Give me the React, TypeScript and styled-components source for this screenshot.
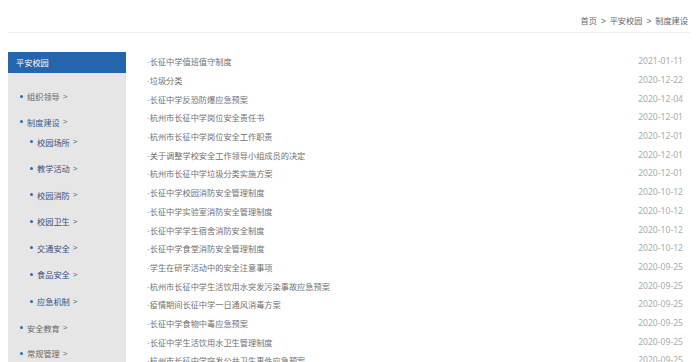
import React from 'react'
import styled, { createGlobalStyle } from 'styled-components'

const GlobalStyle = createGlobalStyle`
  body {
    margin: 0;
    background: #fff;
    font-family: "Noto Sans CJK SC", "Noto Sans", sans-serif;
  }
`

type MenuItem = { name: string; active?: boolean; children?: string[] }

const menu: MenuItem[] = [
  { name: '组织领导' },
  {
    name: '制度建设',
    active: true,
    children: ['校园场所', '教学活动', '校园消防', '校园卫生', '交通安全', '食品安全', '应急机制'],
  },
  { name: '安全教育' },
  { name: '常规管理' },
]

const articles = [
  ['长征中学值班值守制度', '2021-01-11'],
  ['垃圾分类', '2020-12-22'],
  ['长征中学反恐防爆应急预案', '2020-12-04'],
  ['杭州市长征中学岗位安全责任书', '2020-12-01'],
  ['杭州市长征中学岗位安全工作职责', '2020-12-01'],
  ['关于调整学校安全工作领导小组成员的决定', '2020-12-01'],
  ['杭州市长征中学垃圾分类实施方案', '2020-12-01'],
  ['长征中学校园消防安全管理制度', '2020-10-12'],
  ['长征中学实验室消防安全管理制度', '2020-10-12'],
  ['长征中学学生宿舍消防安全制度', '2020-10-12'],
  ['长征中学食堂消防安全管理制度', '2020-10-12'],
  ['学生在研学活动中的安全注意事项', '2020-09-25'],
  ['杭州市长征中学生活饮用水突发污染事故应急预案', '2020-09-25'],
  ['疫情期间长征中学一日通风消毒方案', '2020-09-25'],
  ['长征中学食物中毒应急预案', '2020-09-25'],
  ['长征中学生活饮用水卫生管理制度', '2020-09-25'],
  ['杭州市长征中学突发公共卫生事件应急预案', '2020-09-25'],
]

function App() {
  return (
    <Page>
      <GlobalStyle />
      <Breadcrumb>
        <Crumb>首页</Crumb>
        <Sep>&gt;</Sep>
        <Crumb>平安校园</Crumb>
        <Sep>&gt;</Sep>
        <Crumb>制度建设</Crumb>
      </Breadcrumb>
      <Body>
        <Sidebar>
          <SideTitle>平安校园</SideTitle>
          <Menu>
            {menu.map((item) => (
              <li key={item.name}>
                <MenuRow $active={item.active}>
                  <Bullet />
                  {item.name}
                  <Arrow>&gt;</Arrow>
                </MenuRow>
                {item.children && (
                  <SubMenu>
                    {item.children.map((c) => (
                      <li key={c}>
                        <MenuRow $sub>
                          <Bullet />
                          {c}
                          <Arrow $sub>&gt;</Arrow>
                        </MenuRow>
                      </li>
                    ))}
                  </SubMenu>
                )}
              </li>
            ))}
          </Menu>
        </Sidebar>
        <List>
          {articles.map(([title, date]) => (
            <Row key={title}>
              <Title>
                <Dot>·</Dot>
                {title}
              </Title>
              <DateText>{date}</DateText>
            </Row>
          ))}
        </List>
      </Body>
    </Page>
  )
}

const Page = styled.div`
  padding: 0 10px 0 8px;
  height: 362px;
  overflow: hidden;
`

const Breadcrumb = styled.div`
  height: 33px;
  display: flex;
  justify-content: flex-end;
  align-items: flex-end;
  padding: 0 2px 6px 0;
  box-sizing: border-box;
  border-bottom: 1px solid #eeeeee;
  font-size: 8.2px;
  color: #666;
`

const Crumb = styled.span``

const Sep = styled.span`
  margin: 0 4px;
  font-family: "Liberation Sans", sans-serif;
`

const Body = styled.div`
  display: flex;
  margin-top: 19px;
`

const Sidebar = styled.aside`
  width: 118px;
  flex-shrink: 0;
  background: #e6e6e6;
  min-height: 320px;
`

const SideTitle = styled.div`
  height: 21px;
  line-height: 21px;
  background: #2366ad;
  color: #fff;
  font-size: 8.2px;
  padding-left: 8px;
`

const Menu = styled.ul`
  list-style: none;
  margin: 0;
  padding: 13px 0 0 12px;
  display: flex;
  flex-direction: column;
  gap: 5.5px;

  & > li {
    display: flex;
    flex-direction: column;
  }
`

const SubMenu = styled.ul`
  list-style: none;
  margin: 0 0 1px;
  padding: 0 0 0 10px;
  display: flex;
  flex-direction: column;
  gap: 6.6px;
`

const MenuRow = styled.div<{ $active?: boolean; $sub?: boolean }>`
  height: 20px;
  display: flex;
  align-items: center;
  font-size: 8.2px;
  color: ${(p) => (p.$sub ? '#32507c' : p.$active ? '#3a5f8e' : '#666')};
`

const Bullet = styled.span`
  width: 3px;
  height: 3px;
  border-radius: 50%;
  background: #2a6bb2;
  margin-right: 4px;
`

const Arrow = styled.span<{ $sub?: boolean }>`
  margin-left: 3px;
  font-family: "Liberation Sans", sans-serif;
  font-size: 8px;
  color: ${(p) => (p.$sub ? '#3c6b5f' : '#666')};
`

const List = styled.ul`
  list-style: none;
  margin: 0 0 0 21px;
  padding: 0;
  flex: 1;
`

const Row = styled.li`
  height: 18.7px;
  display: flex;
  align-items: center;
  justify-content: space-between;
  padding-right: 7px;
`

const Title = styled.span`
  font-size: 8.2px;
  color: #707070;
`

const Dot = styled.span`
  font-family: "Liberation Sans", sans-serif;
  color: #888;
`

const DateText = styled.span`
  font-family: "Noto Sans", sans-serif;
  font-size: 8.6px;
  color: #aaa;
`

export default App
